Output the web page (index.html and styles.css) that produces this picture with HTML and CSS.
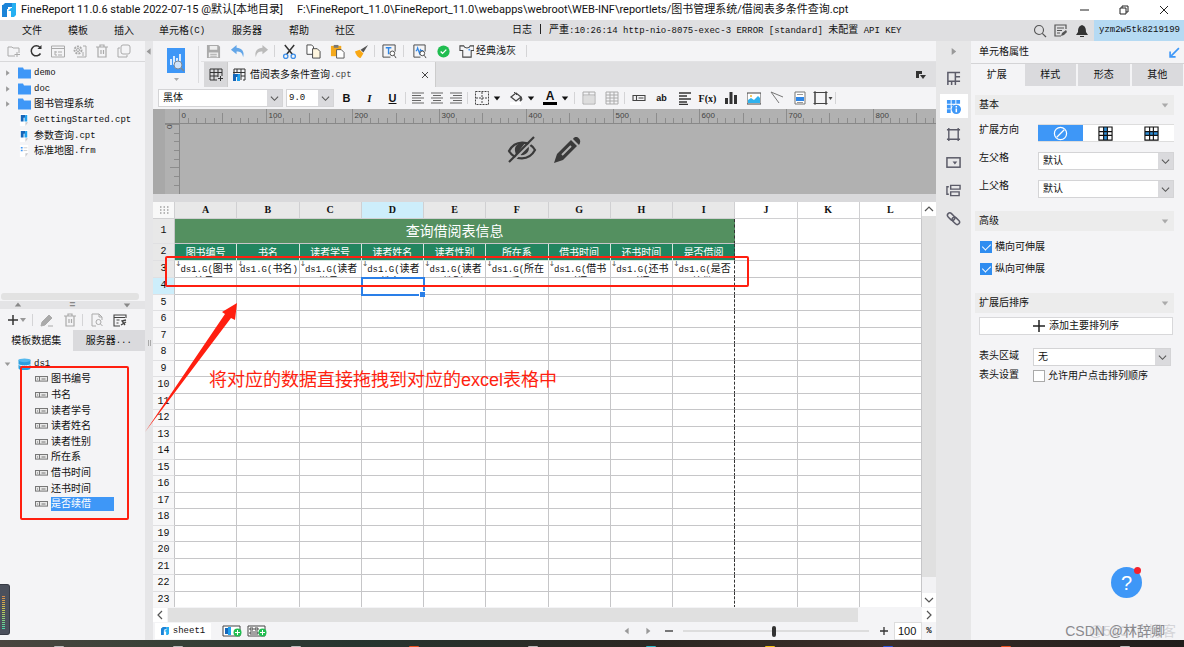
FILE: index.html
```
<!DOCTYPE html>
<html lang="zh-CN">
<head>
<meta charset="utf-8">
<title>FineReport 11.0.6</title>
<link rel="stylesheet" href="styles.css">
</head>
<body>
<svg class="defs" aria-hidden="true">
  <symbol id="fr" viewBox="0 0 14 14"><path d="M1 2l2-2h7v4H6v2H5v8H0V2z" fill="#1b84d8"/><path d="M10 0h4v12l-2 2H9V8H6l3-3h1z" fill="#26b0f2"/></symbol>
  <symbol id="chev" viewBox="0 0 10 10"><path d="M1 3l4 4 4-4" fill="none" stroke="#555" stroke-width="1.2"/></symbol>
  <symbol id="tri" viewBox="0 0 10 10"><path d="M1 3h8L5 8z" fill="currentColor"/></symbol>
  <symbol id="folder" viewBox="0 0 13 11"><path d="M0 0h5l1 2h7v9H0z" fill="#3e97f7"/></symbol>
  <symbol id="cpt" viewBox="0 0 12 13"><path d="M1 0h9v9l-3 4H1z" fill="#fff"/><path d="M10 9H7v4z" fill="#c9c9cc"/><path d="M2 1h5v3H5v4H2z" fill="#1565b8"/><path d="M7 1h2v7H6V5z" fill="#1ea0ee"/></symbol>
  <symbol id="field" viewBox="0 0 13 6"><rect x=".5" y=".5" width="12" height="4.6" fill="#e8e8e8" stroke="#777"/><path d="M4.5 1v4M6.5 3h4M2 3h1" stroke="#777"/></symbol>
  <symbol id="trash" viewBox="0 0 14 14"><path d="M1 3h12M5 3V1h4v2M3 3v10h8V3M6 6v4M8.5 6v4" fill="none" stroke="#aaa" stroke-width="1.2"/></symbol>
</svg>

<header class="titlebar">
  <svg class="i14"><use href="#fr"/></svg>
  <span>FineReport 11.0.6 stable 2022-07-15 @默认[本地目录]</span>
  <span class="path">F:\FineReport_11.0\FineReport_11.0\webapps\webroot\WEB-INF\reportlets/图书管理系统/借阅表多条件查询.cpt</span>
  <div class="winctl">
    <button aria-label="最小化"><svg viewBox="0 0 12 12"><path d="M2 6h9" stroke="#222"/></svg></button>
    <button aria-label="还原"><svg viewBox="0 0 12 12"><path d="M2 4h6v6H2zM4 4V2h6v6H8" fill="none" stroke="#222"/></svg></button>
    <button aria-label="关闭"><svg viewBox="0 0 12 12"><path d="M2 2l8 8M10 2l-8 8" stroke="#222"/></svg></button>
  </div>
</header>

<nav class="menubar">
  <button class="mi">文件</button><button class="mi">模板</button><button class="mi">插入</button><button class="mi wide">单元格<span class="m">(C)</span></button><button class="mi sv">服务器</button><button class="mi">帮助</button><button class="mi">社区</button>
  <p class="log">日志<i class="bar"></i>严重<span class="m">:10:26:14 http-nio-8075-exec-3 ERROR [standard] </span>未配置<span class="m"> API KEY</span></p>
  <div class="account">
    <button aria-label="搜索"><svg viewBox="0 0 14 14"><circle cx="6" cy="6" r="4.5" fill="none" stroke="#555" stroke-width="1.1"/><path d="M9.3 9.3L13 13" stroke="#555" stroke-width="1.2"/></svg></button>
    <button aria-label="反馈"><svg viewBox="0 0 14 14"><path d="M12 5V1H1v11h6M3 4h7M3 6.500h5M3 9h3" fill="none" stroke="#555" stroke-width="1.2"/><path d="M7 12l1-3 4-3 1 2-3 3z" fill="#555"/></svg></button>
    <button aria-label="通知"><svg viewBox="0 0 14 14"><path d="M7 1c3 1 4 3 4 7l2 3H1l2-3c0-4 1-6 4-7zM5 12h4v1H5z" fill="#333"/></svg></button>
    <span class="user m">yzm2w5tk8219199</span>
  </div>
</nav>

<main class="main">
  <aside class="left">
    <div class="tools">
      <button aria-label="新建"><svg viewBox="0 0 14 14"><path d="M8 12H1V3h4l1 1h6v5M10 8v5M7.500 10.500h5.500" fill="none" stroke="#aaa"/></svg></button>
      <button aria-label="刷新"><svg viewBox="0 0 14 14"><path d="M11.500 9.500a5 5 0 1 1-.5-6" fill="none" stroke="#333" stroke-width="1.500"/><path d="M12.500 1v4H8.500z" fill="#333"/></svg></button>
      <button aria-label="目录"><svg viewBox="0 0 14 14"><path d="M.5 2h13v11H.5zM.5 4.500h13M4 7v4M4 8h2M4 11h2M7 8h4M7 11h4" fill="none" stroke="#aaa"/></svg></button>
      <button aria-label="设置"><svg viewBox="0 0 14 14"><circle cx="5" cy="6" r="3.500" fill="none" stroke="#aaa" stroke-width="2" stroke-dasharray="2 1"/><circle cx="5" cy="6" r="1.500" fill="none" stroke="#aaa"/><path d="M10 2h3v11H4M10 8v4" fill="none" stroke="#aaa"/></svg></button>
      <button aria-label="删除"><svg><use href="#trash"/></svg></button>
      <button aria-label="复制"><svg viewBox="0 0 14 14"><rect x="4" y="1" width="9" height="9" rx="2" fill="none" stroke="#aaa"/><path d="M3 4H1v9h9v-2" fill="none" stroke="#aaa"/></svg></button>
    </div>
    <ul class="tree files">
      <li><svg class="ar"><use href="#tri"/></svg><svg class="ic"><use href="#folder"/></svg><span class="m">demo</span></li>
      <li><svg class="ar"><use href="#tri"/></svg><svg class="ic"><use href="#folder"/></svg><span class="m">doc</span></li>
      <li><svg class="ar"><use href="#tri"/></svg><svg class="ic"><use href="#folder"/></svg>图书管理系统</li>
      <li><i class="ar"></i><svg class="ic"><use href="#cpt"/></svg><span class="m">GettingStarted.cpt</span></li>
      <li><i class="ar"></i><svg class="ic"><use href="#cpt"/></svg>参数查询<span class="m">.cpt</span></li>
      <li><i class="ar"></i><svg class="ic" viewBox="0 0 12 13"><path d="M1 0h9v9l-3 4H1z" fill="#fff"/><path d="M10 9H7v4z" fill="#c9c9cc"/><path d="M2 3h2M2 6h2" stroke="#3e97f7" stroke-width="1.500"/><path d="M5 3h4M5 6h4" stroke="#ccc"/></svg>标准地图<span class="m">.frm</span></li>
    </ul>
    <div class="hbar"></div>
    <div class="split"><svg class="up"><use href="#tri"/></svg><b>=</b><svg><use href="#tri"/></svg></div>
    <div class="tools data">
      <button aria-label="添加"><svg viewBox="0 0 20 14"><path d="M6 2v10M1 7h10" stroke="#333" stroke-width="1.500"/><path d="M13 5h6l-3 4z" fill="#999"/></svg></button>
      <i class="sep"></i>
      <button aria-label="编辑"><svg viewBox="0 0 14 14"><path d="M1 13l1-4 7-7 3 3-7 7zM8 13h5" fill="#aaa" stroke="#aaa"/></svg></button>
      <button aria-label="删除"><svg><use href="#trash"/></svg></button>
      <i class="sep"></i>
      <button aria-label="预览"><svg viewBox="0 0 14 14"><path d="M6 13H2V1h7l3 3v3M9 1v3h3" fill="none" stroke="#aaa"/><circle cx="8.500" cy="9" r="2.500" fill="none" stroke="#aaa"/><path d="M10.500 11l2 2" stroke="#aaa"/></svg></button>
      <button aria-label="数据"><svg viewBox="0 0 14 14"><path d="M7 13H1V2h12v3M1 4.500h11M3.500 7h3M3.500 10h2" fill="none" stroke="#444" stroke-width="1.100"/><path d="M13 7l-4 1 3 4M8 12l5-3" fill="none" stroke="#444" stroke-width="1.300"/></svg></button>
    </div>
    <div class="dtabs"><button class="on">模板数据集</button><button>服务器<span class="m">...</span></button></div>
    <ul class="tree ds">
      <li><svg class="ar open"><use href="#tri"/></svg><svg class="ic" viewBox="0 0 13 13"><path d="M0 2v9c1 3 12 3 13 0V2z" fill="#2b9fe0"/><ellipse cx="6.500" cy="2.500" rx="6.500" ry="2" fill="#56b9ee"/><path d="M0 7c2 2 11 2 13 0" fill="none" stroke="#fff"/></svg><span class="m">ds1</span></li>
      <li><svg class="fd"><use href="#field"/></svg>图书编号</li>
      <li><svg class="fd"><use href="#field"/></svg>书名</li>
      <li><svg class="fd"><use href="#field"/></svg>读者学号</li>
      <li><svg class="fd"><use href="#field"/></svg>读者姓名</li>
      <li><svg class="fd"><use href="#field"/></svg>读者性别</li>
      <li><svg class="fd"><use href="#field"/></svg>所在系</li>
      <li><svg class="fd"><use href="#field"/></svg>借书时间</li>
      <li><svg class="fd"><use href="#field"/></svg>还书时间</li>
      <li><svg class="fd"><use href="#field"/></svg><span class="sel">是否续借</span></li>
    </ul>
  </aside>

  <div class="gutter"><svg><use href="#tri"/></svg><span></span></div>

  <section class="center">
    <div class="top">
      <button class="preview" aria-label="预览"><svg viewBox="0 0 26 36"><path d="M4 1h18v25H4z" fill="#3e97f7"/><path d="M8 12v6M11 9v9M14 11v5M17 7v8" stroke="#fff" stroke-width="1.600"/><circle cx="15" cy="18" r="4" fill="#cfe3fb" stroke="#7c8894"/><path d="M18 21l3 3" stroke="#7c8894" stroke-width="1.500"/><path d="M11 31h5l-2.500 3z" fill="#aaa"/></svg></button>
      <div class="rows">
        <div class="tb">
          <button aria-label="保存"><svg viewBox="0 0 16 16"><path d="M1 1h12l2 2v12H1z" fill="#aaa"/><path d="M4 2h8v4H4zM3 9h10v5H3z" fill="#eee"/><path d="M4.500 11h7M4.500 13h7" stroke="#aaa"/></svg></button>
          <button aria-label="撤销"><svg viewBox="0 0 16 16"><path d="M7 1L1 6l6 5V8c4 0 6 1 7 6 2-6-2-10-7-10z" fill="#63a6e8"/></svg></button>
          <button aria-label="重做"><svg viewBox="0 0 16 16"><path d="M9 1l6 5-6 5V8c-4 0-6 1-7 6C0 8 4 4 9 4z" fill="#bbb"/></svg></button>
          <i class="sep"></i>
          <button aria-label="剪切"><svg viewBox="0 0 16 16"><path d="M3 1l8 10M13 1L5 11" stroke="#333" stroke-width="1.600"/><circle cx="4" cy="13" r="2.300" fill="none" stroke="#3e8fe8" stroke-width="1.400"/><circle cx="12" cy="13" r="2.300" fill="none" stroke="#3e8fe8" stroke-width="1.400"/></svg></button>
          <button aria-label="复制"><svg viewBox="0 0 16 16"><path d="M1 1h5l2 2v8H1z" fill="#fff" stroke="#444"/><path d="M7 5h5l3 3v7H7z" fill="#fff6df" stroke="#444"/></svg></button>
          <button aria-label="粘贴"><svg viewBox="0 0 16 16"><path d="M1 2h11v11H1z" fill="#f4a91c"/><path d="M4 1h5v3H4z" fill="#777"/><path d="M7 6h5l3 3v6H7z" fill="#fff" stroke="#555"/></svg></button>
          <button aria-label="格式刷"><svg viewBox="0 0 16 16"><path d="M1 8l5-2 4 4-3 5c-2 0-5-3-6-7z" fill="#f9a815"/><path d="M7 6l3 3 5-8z" fill="#555"/></svg></button>
          <i class="sep"></i>
          <button aria-label="查找"><svg viewBox="0 0 16 16"><path d="M9 14H1V1h13v7" fill="none" stroke="#444"/><path d="M4 4h6M7 4v7" stroke="#2f86e6" stroke-width="1.500"/><circle cx="11" cy="10" r="2.500" fill="#fff" stroke="#444"/><path d="M13 12l2 3" stroke="#444"/></svg></button>
          <i class="sep w"></i>
          <button aria-label="监控"><svg viewBox="0 0 16 16"><path d="M9 14H2V1h12v7" fill="none" stroke="#444"/><path d="M4 7h1l1-3 2 6 1-4 1 1h2" fill="none" stroke="#2f86e6" stroke-width="1.200"/><circle cx="11" cy="10" r="2.500" fill="#fff" stroke="#444"/><path d="M13 12l2 3" stroke="#444"/></svg></button>
          <button aria-label="正常"><svg viewBox="0 0 16 16"><circle cx="8" cy="8" r="6.500" fill="#20bd50"/><path d="M5 8l2 2 4-4" fill="none" stroke="#fff" stroke-width="1.500"/></svg></button>
          <button class="theme"><svg viewBox="0 0 16 16"><path d="M5 2H1v5h3v7h9V7h3V2h-4c-1 3-6 3-7 0z" fill="none" stroke="#444" stroke-width="1.100"/><circle cx="11" cy="6" r="1" fill="#3e97f7"/></svg>经典浅灰</button>
          <i class="sep w"></i>
        </div>
        <div class="tabs">
          <button class="add" aria-label="新建模板"><svg viewBox="0 0 14 14"><path d="M8 12H1V1h12v7M1 4.500h12M1 8h8M5 1v11M9 1v8M11.500 8v5M9 10.500h5" fill="none" stroke="#333"/></svg></button>
          <div class="tab"><svg class="i14" viewBox="0 0 14 14"><path d="M2 6V1h11v11h-2M1 4.500h12M5 1v4M9 1v11M9 8h4" fill="none" stroke="#333"/><path d="M1 6h5v3H4v4H1z" fill="#1565b8"/><path d="M6 6h2v7H5v-3z" fill="#1ea0ee"/></svg>借阅表多条件查询<span class="m grey">.cpt</span><button class="x" aria-label="关闭标签"><svg viewBox="0 0 10 10"><path d="M2 2l6 6M8 2L2 8" stroke="#444"/></svg></button></div>
          <button class="more" aria-label="更多"><svg viewBox="0 0 12 10"><path d="M1 8V1h6v3H4v4z" fill="#333"/><path d="M5 5h6L8 9z" fill="#333"/></svg></button>
        </div>
      </div>
    </div>
    <div class="fmt">
      <label class="sel-box font"><select aria-label="字体"><option>黑体</option></select><svg><use href="#chev"/></svg></label>
      <label class="sel-box size"><select class="m" aria-label="字号"><option>9.0</option></select><svg><use href="#chev"/></svg></label>
      <button class="b23 t"><b>B</b></button><button class="b23 t"><em>I</em></button><button class="b23 t"><u>U</u></button>
      <i class="sep"></i>
      <button class="b19" aria-label="左对齐"><svg viewBox="0 0 14 14"><path d="M1 2h12M1 4.500h9M1 7h12M1 9.500h9M1 12h12" stroke="#666" stroke-width="1.200"/></svg></button>
      <button class="b19" aria-label="居中"><svg viewBox="0 0 14 14"><path d="M1 2h12M3 4.500h8M1 7h12M3 9.500h8M1 12h12" stroke="#666" stroke-width="1.200"/></svg></button>
      <button class="b19" aria-label="右对齐"><svg viewBox="0 0 14 14"><path d="M1 2h12M4 4.500h9M1 7h12M4 9.500h9M1 12h12" stroke="#666" stroke-width="1.200"/></svg></button>
      <i class="sep w"></i>
      <button class="b34" aria-label="边框"><svg viewBox="0 0 14 14"><path d="M.5.5h13v13H.5zM7 1v12M1 7h12" fill="none" stroke="#444" stroke-dasharray="2 1"/></svg><svg class="dd"><use href="#tri"/></svg></button>
      <button class="b34" aria-label="填充"><svg viewBox="0 0 14 14"><path d="M2 6l5-4 5 4-5 4z" fill="none" stroke="#444" stroke-width="1.300"/><path d="M5 1l3 3M12 6c2 3 0 4-1 4z" fill="#444" stroke="#444"/><path d="M1 12.500h11" stroke="#fff" stroke-width="3"/></svg><svg class="dd"><use href="#tri"/></svg></button>
      <button class="b34 colr" aria-label="字体颜色"><span>A</span><svg class="dd"><use href="#tri"/></svg></button>
      <i class="sep"></i>
      <button class="b23" aria-label="合并"><svg viewBox="0 0 14 14"><path d="M1 1h12v12H1zM1 4h12M7 1v3" fill="none" stroke="#aaa"/><path d="M2 5h10v7H2z" fill="#ddd"/></svg></button>
      <button class="b23" aria-label="拆分"><svg viewBox="0 0 14 14"><path d="M1 1h12v12H1zM1 4h12M1 7h12M1 10h12M5 1v12M9 1v12" fill="none" stroke="#aaa"/></svg></button>
      <i class="sep"></i>
      <button class="b23" aria-label="数据列"><svg viewBox="0 0 14 14"><path d="M1 4.500h12v5H1zM4.500 5v4M6.500 7h5" fill="none" stroke="#444" stroke-width="1.100"/></svg></button>
      <button class="b23 ab">ab</button>
      <button class="b23" aria-label="富文本"><svg viewBox="0 0 14 14"><path d="M1 2h12M1 5h8M1 8h12M1 11h8M1 13.500h9" stroke="#333" stroke-width="1.500"/></svg></button>
      <button class="b23 fx">F(x)</button>
      <button class="b23" aria-label="图表"><svg viewBox="0 0 14 14"><path d="M1 7h3v6H1zM5.500 1h3v12h-3zM10 4h3v9h-3z" fill="#333"/></svg></button>
      <button class="b23" aria-label="图片"><svg viewBox="0 0 14 14"><path d="M0 2h14v11H0z" fill="#fff" stroke="#444"/><path d="M1 12V9l3-2 3 2 4-4 2 2v5z" fill="#2fb2ee"/><circle cx="4" cy="5" r="1" fill="#f5b331"/></svg></button>
      <button class="b23" aria-label="斜线"><svg viewBox="0 0 14 14"><path d="M1 1l12 5M1 1l8 11" stroke="#777"/></svg></button>
      <button class="b23" aria-label="子报表"><svg viewBox="0 0 14 14"><path d="M2 1h10v12H2z" fill="#fff" stroke="#777"/><path d="M3 6h8v4H3z" fill="#2f86e6"/><path d="M4 3.500h6M4 11.500h6" stroke="#999"/></svg></button>
      <button class="b23" aria-label="控件"><svg viewBox="0 0 20 14"><path d="M2 1.500h11v11H2zM.5 1.500h14M.5 12.500h14M2 0v14M13 0v14" fill="none" stroke="#444"/><path d="M15.500 6h4l-2 3z" fill="#444"/></svg></button>
      <i class="sep"></i>
    </div>
    <div class="param">
      <svg class="ruler" id="ruler" aria-hidden="true"></svg>
      <div class="paramicons">
        <svg viewBox="0 0 30 28"><path d="M2 15C8 4 22 4 28 14c-6 11-20 11-26 1z" fill="none" stroke="#3a3a3a" stroke-width="2.200"/><path d="M8 15c-1-6 5-9 10-8L9 19zM21 9c3 6-2 11-8 10z" fill="#3a3a3a"/><path d="M4 27L28 3" stroke="#b1b1b1" stroke-width="2"/><path d="M2 26L27 1" stroke="#3a3a3a" stroke-width="2.200"/></svg>
        <svg viewBox="0 0 28 28"><path d="M1 27l3-9L18 4l6 6L10 24z" fill="#3a3a3a"/><path d="M20 3c3-5 10 1 6 6z" fill="#3a3a3a"/><path d="M9 19L18 10" stroke="#b1b1b1" stroke-width="2"/></svg>
      </div>
    </div>
    <div class="band"></div>
    <div class="sheet">
      <table class="grid">
        <thead><tr><th class="corner"><svg viewBox="0 0 10 8"><path d="M1 1h9M1 4h9M1 7h9" stroke="#777" stroke-width="1.200" stroke-dasharray="1.500 2"/></svg></th><th>A</th><th>B</th><th>C</th><th class="cur">D</th><th>E</th><th>F</th><th>G</th><th>H</th><th>I</th><th class="out">J</th><th class="out">K</th><th class="out">L</th></tr></thead>
        <tbody id="cells">
          <tr class="r1"><th>1</th><td colspan="9" class="title">查询借阅表信息</td><td></td><td></td><td></td></tr>
          <tr class="r2"><th>2</th><td><div>图书编号</div></td><td><div>书名</div></td><td><div>读者学号</div></td><td><div>读者姓名</div></td><td><div>读者性别</div></td><td><div>所在系</div></td><td><div>借书时间</div></td><td><div>还书时间</div></td><td><div>是否借阅</div></td><td></td><td></td><td></td></tr>
          <tr class="r3"><th>3</th><td><div><span class="m">ds1.G(</span>图书<br>编号<span class="m">)</span></div></td><td><div><span class="m">ds1.G(</span>书名<span class="m">)</span></div></td><td><div><span class="m">ds1.G(</span>读者<br>学号<span class="m">)</span></div></td><td><div><span class="m">ds1.G(</span>读者<br>姓名<span class="m">)</span></div></td><td><div><span class="m">ds1.G(</span>读者<br>性别<span class="m">)</span></div></td><td><div><span class="m">ds1.G(</span>所在<br>系<span class="m">)</span></div></td><td><div><span class="m">ds1.G(</span>借书<br>时间<span class="m">)</span></div></td><td><div><span class="m">ds1.G(</span>还书<br>时间<span class="m">)</span></div></td><td><div><span class="m">ds1.G(</span>是否<br>续借<span class="m">)</span></div></td><td></td><td></td><td></td></tr>
        </tbody>
      </table>
      <div class="vscroll"><button aria-label="向上"><svg class="up"><use href="#chev"/></svg></button><span></span><button aria-label="向下"><svg><use href="#chev"/></svg></button></div>
    </div>
    <div class="hscroll"><button aria-label="向左"><svg class="l"><use href="#chev"/></svg></button><span></span><button aria-label="向右"><svg class="r"><use href="#chev"/></svg></button></div>
    <footer class="foot">
      <button class="stab"><svg><use href="#fr"/></svg><span class="m">sheet1</span></button>
      <button aria-label="新增报表页"><svg class="new" viewBox="0 0 20 12"><path d="M1 1h17v10H1z" fill="#fff" stroke="#444"/><path d="M3 3h3v6H3z" fill="#1565b8"/><path d="M6 2h3v8H6z" fill="#1ea0ee"/><circle cx="15.500" cy="7.500" r="4" fill="#20bd50"/><path d="M13 7.500h5M15.500 5v5" stroke="#fff"/></svg></button>
      <button aria-label="新增聚合页"><svg class="new" viewBox="0 0 20 12"><path d="M1 1h17v10H1z" fill="#fff" stroke="#444"/><path d="M3 3h3v2H3zM8 3h3v2H8zM3 7h8v2H3z" fill="none" stroke="#444"/><circle cx="15.500" cy="7.500" r="4" fill="#20bd50"/><path d="M13 7.500h5M15.500 5v5" stroke="#fff"/></svg></button>
      <div class="zoom">
        <button aria-label="上一页"><svg class="l"><use href="#tri"/></svg></button>
        <button aria-label="下一页"><svg class="r"><use href="#tri"/></svg></button>
        <button aria-label="缩小"><svg viewBox="0 0 10 10"><path d="M1 5h8" stroke="#333" stroke-width="1.300"/></svg></button>
        <input type="range" aria-label="缩放" min="0" max="100" value="49">
        <button aria-label="放大"><svg viewBox="0 0 10 10"><path d="M1 5h8M5 1v8" stroke="#333" stroke-width="1.300"/></svg></button>
        <input class="pct" id="pct" type="text" value="100"><label class="m" for="pct">%</label>
      </div>
    </footer>
  </section>

  <nav class="side">
    <button aria-label="收起"><svg class="r"><use href="#tri"/></svg></button>
    <button aria-label="单元格元素"><svg viewBox="0 0 16 16"><path d="M2 12V1.500h13M2 11h8V1.500M2 10v5M6 11v4M10 11v4M10 6h5M10 11h5" fill="none" stroke="#5b5b68" stroke-width="1.600"/></svg></button>
    <button class="on" aria-label="单元格属性"><svg viewBox="0 0 16 16"><path d="M1 1h4v4H1zM6 1h4v4H6zM11 1h4v4h-4zM1 6h4v4H1zM1 11h4v4H1zM6 6h2v2H6z" fill="#3e97f7"/><circle cx="11" cy="11" r="5" fill="#3e97f7"/><path d="M11 10v4M11 7.500v1.500" stroke="#fff" stroke-width="1.600"/></svg></button>
    <button aria-label="悬浮元素"><svg viewBox="0 0 16 16"><path d="M3 3h10v10H3zM1 3h14M1 13h14M3 1v14M13 1v14" fill="none" stroke="#5b5b68" stroke-width="1.500"/></svg></button>
    <button aria-label="控件设置"><svg viewBox="0 0 16 16"><rect x="1" y="3" width="14" height="10" fill="none" stroke="#5b5b68" stroke-width="1.600"/><path d="M7 7h5l-2.500 3z" fill="#5b5b68"/></svg></button>
    <button aria-label="条件属性"><svg viewBox="0 0 16 16"><path d="M5 2.500h10v4H5zM5 9.500h9v4H5zM3 4H1v8h2" fill="none" stroke="#5b5b68" stroke-width="1.500"/></svg></button>
    <button aria-label="超级链接"><svg viewBox="0 0 16 16"><rect x="1" y="3.500" width="9" height="5" rx="2.500" transform="rotate(45 5.500 6)" fill="none" stroke="#5b5b68" stroke-width="1.600"/><rect x="6" y="8" width="9" height="5" rx="2.500" transform="rotate(45 10.500 10.500)" fill="none" stroke="#5b5b68" stroke-width="1.600"/></svg></button>
  </nav>

  <aside class="right">
    <h2>单元格属性<svg viewBox="0 0 10 10"><path d="M9 1L2 8M1 4v5h5" fill="none" stroke="#3e97f7" stroke-width="1.500"/></svg></h2>
    <div class="ptabs"><button class="on">扩展</button><button>样式</button><button>形态</button><button>其他</button></div>
    <div class="panel">
      <h3>基本<svg><use href="#tri"/></svg></h3>
      <div class="row"><span class="lb">扩展方向</span>
        <div class="seg">
          <button class="on" aria-label="不扩展"><svg viewBox="0 0 16 16"><circle cx="8" cy="8" r="6.500" fill="none" stroke="#fff" stroke-width="1.300"/><path d="M4 12l8-8" stroke="#fff" stroke-width="1.300"/></svg></button>
          <button aria-label="纵向"><svg viewBox="0 0 16 16"><path d="M6 1h4v14H6z" fill="#2f8fd8"/><path d="M1 1h14v14H1zM6 1v14M10 1v14M1 6h14M1 10h14" fill="none" stroke="#111" stroke-width="1.200"/></svg></button>
          <button aria-label="横向"><svg viewBox="0 0 16 16"><path d="M1 6h14v4H1z" fill="#2f8fd8"/><path d="M1 1h14v14H1zM6 1v14M10 1v14M1 6h14M1 10h14" fill="none" stroke="#111" stroke-width="1.200"/></svg></button>
        </div></div>
      <div class="row"><label class="lb" for="lp">左父格</label><div class="sel-box"><select id="lp"><option>默认</option></select><svg><use href="#chev"/></svg></div></div>
      <div class="row"><label class="lb" for="tp">上父格</label><div class="sel-box"><select id="tp"><option>默认</option></select><svg><use href="#chev"/></svg></div></div>
      <h3>高级<svg><use href="#tri"/></svg></h3>
      <label class="ck"><input type="checkbox" checked>横向可伸展</label>
      <label class="ck"><input type="checkbox" checked>纵向可伸展</label>
      <h3 class="sort">扩展后排序<svg><use href="#tri"/></svg></h3>
      <button class="addsort"><svg viewBox="0 0 12 12"><path d="M6 0v12M0 6h12" stroke="#222" stroke-width="1.500"/></svg>添加主要排列序</button>
      <div class="row hd"><label class="lb" for="ha">表头区域</label><div class="sel-box"><select id="ha"><option>无</option></select><svg><use href="#chev"/></svg></div></div>
      <div class="row hd set"><span class="lb">表头设置</span><label class="ck"><input type="checkbox">允许用户点击排列顺序</label></div>
    </div>
  </aside>
</main>

<div class="taskbar"><i></i><i></i><i></i><i class="o"></i><i></i><i class="cy"></i><i class="y"></i><i class="bl"></i><i class="o"></i><i></i></div>

<div class="mark cells"></div>
<div class="mark fields"></div>
<svg class="arrow" viewBox="0 0 96 132"><path d="M1 130L81 12l-3-2L93 1l-2 17-4-2z" fill="#ff1f10"/></svg>
<p class="note">将对应的数据直接拖拽到对应的excel表格中</p>
<div class="meter"><span></span></div>
<button class="help" aria-label="帮助">?</button>
<p class="wm faint">@51CTO博客</p>
<p class="wm">CSDN @林辞卿</p>
<script src="app.js"></script>
</body>
</html>
```
FILE: styles.css
```
* { box-sizing: border-box; }
body { margin: 0; height: 100vh; display: flex; flex-direction: column; overflow: hidden; position: relative; background: #f4f4f6; color: #111; font: 10px/14px "Liberation Sans", "Noto Sans CJK SC", sans-serif; }
button { border: 0; padding: 0; margin: 0; background: none; font: inherit; color: inherit; display: flex; align-items: center; justify-content: center; }
p, h2, h3, ul { margin: 0; padding: 0; font-weight: normal; font-size: inherit; }
ul { list-style: none; }
select, input { font: inherit; color: inherit; margin: 0; }
svg { display: block; flex: none; width: 14px; height: 14px; }
.defs { position: absolute; width: 0; height: 0; }
.m { font-family: "Liberation Mono", monospace; font-size: 9px; white-space: pre; }
.i14 { width: 14px; height: 14px; }
.sep { width: 1px; height: 12px; margin: 0 2px 0 1px; background: #d4d4d6; flex: none; }
.sep.w { margin: 0 3px 0 2px; }

.titlebar { height: 20px; flex: none; display: flex; align-items: center; background: #fff; padding-left: 2px; font: 11px/14px Roboto, "Noto Sans CJK SC", sans-serif; white-space: nowrap; }
.titlebar > span { margin-left: 5px; }
.titlebar .path { margin-left: 14px; }
.winctl { margin-left: auto; display: flex; }
.winctl button { width: 40px; }
.winctl svg { width: 12px; height: 12px; }

.menubar { height: 21px; flex: none; display: flex; align-items: center; background: #dfdfe1; padding-left: 9px; white-space: nowrap; }
.mi { width: 46px; }
.mi.wide { width: 70px; margin-right: 1px; }
.mi.sv { width: 58px; }
.log { margin-left: 144px; }
.log .bar { display: inline-block; width: 1px; height: 10px; margin: 0 8px; background: #222; vertical-align: -1px; }
.account { margin-left: auto; display: flex; align-self: stretch; align-items: center; }
.account button { width: 21px; }
.user { align-self: stretch; line-height: 21px; background: #b5daf3; padding: 0 4px 0 5px; margin-left: 1px; }

.main { flex: 1; min-height: 0; display: flex; }
.left { width: 145px; flex: none; display: flex; flex-direction: column; }
.tools { height: 21px; flex: none; display: flex; align-items: center; padding-left: 3px; border-bottom: 1px solid #d8d8da; }
.tools button { width: 22px; }
.tree li { flex: 1; display: flex; align-items: center; white-space: nowrap; }
.tree { display: flex; flex-direction: column; flex: none; }
.files { height: 94px; margin: 3px 0 134px; }
.tree .ar { width: 7px; height: 8px; margin: 0 7px 0 4px; color: #999; transform: rotate(-90deg); }
.tree .ar.open { transform: none; }
.tree .ic { width: 13px; height: 12px; margin-right: 3px; }
.hbar { height: 7px; flex: none; margin: 0 6px 1px 1px; border-radius: 3px; background: #e2e2e2; }
.split { height: 8px; flex: none; background: #e4e4e6; display: flex; align-items: center; justify-content: space-between; padding: 0 13px; color: #888; line-height: 8px; }
.split svg { width: 10px; height: 8px; }
.up { transform: rotate(180deg); }
.l { transform: rotate(90deg); }
.r { transform: rotate(-90deg); }
.data { border: 0; }
.data button { width: 23px; }
.data button:first-child { width: 28px; }
.data button:first-child svg { width: 20px; }
.dtabs { height: 21px; flex: none; display: flex; }
.dtabs button { flex: 1; background: #dadadd; }
.dtabs .on { background: #f4f4f6; }
.ds { height: 156px; margin-top: 5px; }
.fd { width: 13px; height: 6px; margin: 0 3px 0 35px; }
.ds .sel { width: 63px; background: #3e97f7; color: #fff; }
.gutter { width: 8px; flex: none; background: #e6e6e8; display: flex; flex-direction: column; align-items: center; color: #999; padding-top: 6px; }
.gutter svg { width: 8px; height: 9px; transform: rotate(90deg); }
.gutter span { width: 3px; height: 6px; margin-top: 284px; border: solid #aaa; border-width: 0 1px; }

.center { flex: 1; min-width: 0; display: flex; flex-direction: column; }
.top { display: flex; height: 46px; flex: none; }
.preview { width: 46px; border-right: 1px solid #dcdcde; margin: 5px 5px 4px 0; }
.preview svg { width: 26px; height: 36px; }
.rows { flex: 1; min-width: 0; }
.tb { height: 21px; display: flex; align-items: center; margin-left: -3px; border-bottom: 1px solid #e2e2e4; }
.tb button { width: 24px; }
.tb button.theme { width: auto; padding-left: 4px; gap: 2px; margin-right: 8px; }
.tb svg { width: 15px; height: 15px; }
.tabs { height: 25px; display: flex; background: #dfdfe1; }
.tabs .add { width: 24px; background: #d8d8da; border-right: 1px solid #ccc; }
.tab { width: 208px; background: #f4f4f6; display: flex; align-items: center; padding: 0 5px 0 4px; border-right: 1px solid #ccc; }
.tab .i14 { margin-right: 4px; }
.grey { color: #444; }
.x { margin-left: auto; }
.x svg { width: 10px; height: 10px; }
.more { margin: 0 9px 0 auto; }
.more svg { width: 12px; height: 10px; }

.fmt { height: 22px; flex: none; display: flex; align-items: center; padding-left: 5px; }
.sel-box { height: 18px; display: flex; align-items: center; background: #dadadd; border: 1px solid #d4d4d6; }
.sel-box select { flex: 1; min-width: 0; align-self: stretch; appearance: none; border: 0; border-radius: 0; background: #fff; padding: 0 4px; }
.sel-box svg { width: 9px; height: 9px; margin: 0 3px; }
.font { width: 125px; }
.size { width: 48px; margin: 0 1px 0 3px; }
.size select { padding: 0 2px; }
.b23 { width: 23px; flex: none; }
.b19 { width: 19px; flex: none; }
.b34 { width: 34px; flex: none; gap: 4px; }
.fmt > button svg { width: 14px; height: 14px; }
.fmt > button .dd { width: 8px; height: 8px; }
.t { font-size: 11px; }
.t em { font: italic bold 11px "Liberation Serif", serif; }
.t u { font-weight: bold; }
.colr span { width: 14px; line-height: 11px; font-size: 12px; font-weight: bold; border-bottom: 3px solid #000; }
.ab { font-weight: bold; font-size: 9px; }
.fx { font: bold 10px "Liberation Serif", serif; }
.fmt .b23:nth-last-child(2) svg { width: 20px; }

.param { height: 85px; flex: none; background: #b1b1b1; position: relative; }
.ruler { width: 100%; height: 85px; }
.paramicons { position: absolute; left: 45%; top: 27px; display: flex; gap: 15px; padding-left: 2px; }
.paramicons svg { width: 30px; height: 28px; }
.band { height: 8px; flex: none; background: #d9d9db; }

.sheet { flex: 1; min-height: 0; display: flex; overflow: hidden; background: #fff; }
.grid { flex: 1; width: 0; border-collapse: separate; border-spacing: 0; table-layout: fixed; align-self: flex-start; }
.grid th, .grid td { padding: 0; border: solid #c6c6c8; border-width: 0 1px 1px 0; text-align: center; font-weight: normal; line-height: 14px; overflow: hidden; background: #fff; }
.grid thead th { height: 17px; background: #e8e8e8; border-color: #d0d0d2; font: bold 10px/14px "Liberation Serif", serif; }
.grid thead .corner { width: 22px; background: #f8f8f8; }
.corner svg { width: 10px; height: 8px; margin: 0 auto; }
.grid thead .cur, .grid tbody .cur { background: #cdeefb; }
.grid thead .out { background: #fff; }
.grid tbody th { background: #f7f7f8; font: 10px/14px "Liberation Mono", monospace; border-bottom-color: #e0e0e2; }
.grid tr { height: 17px; }
.grid .even { height: 16px; }
.grid .r1 { height: 25px; }
.grid .r1 th, .grid .r2 th, .grid .r3 th { background: #e8e8e8; }
.grid .title { background: #549060; color: #fff; font-size: 14px; line-height: 24px; }
.grid .r2 td:nth-child(-n+10) { background: #22855f; color: #fff; border-color: #d5e5dc; }
.r2 div { height: 16px; line-height: 18px; overflow: hidden; }
.r3 div { height: 16px; line-height: 11px; overflow: hidden; position: relative; padding: 2px 0 0 2px; }
.r3 td:nth-child(-n+10) div::before { content: "↓"; position: absolute; left: 0; top: -4px; font: 8px/14px "DejaVu Sans", sans-serif; color: #555; }
.grid .edge, .grid .title, .grid .r2 td:nth-child(10), .grid .r3 td:nth-child(10) { border-right: 1px dashed #333; }
.grid td.active { outline: 2px solid #2a7fe8; outline-offset: -1px; position: relative; overflow: visible; }
.active::after { content: ""; position: absolute; right: -2px; bottom: -3px; width: 5px; height: 5px; background: #2a7fe8; border: solid #fff; border-width: 1px 0 0 1px; }
.vscroll { width: 14px; flex: none; display: flex; flex-direction: column; background: #f2f2f4; }
.vscroll button, .hscroll button { width: 14px; height: 14px; background: #fff; flex: none; }
.vscroll svg, .hscroll svg { width: 10px; height: 10px; }
.vscroll span { height: 361px; margin-bottom: auto; background: #e0e0e0; }
.hscroll { height: 14px; flex: none; display: flex; margin-top: 1px; }
.hscroll span { width: 690px; margin: 0 auto 0 1px; background: #e0e0e0; }
.foot { height: 18px; flex: none; display: flex; align-items: center; padding-left: 2px; }
.stab { height: 16px; width: 56px; background: #fff; gap: 4px; margin-right: 11px; }
.stab svg { width: 8px; height: 8px; }
.new { width: 20px; height: 12px; margin-right: 5px; }
.zoom { margin-left: auto; display: flex; align-items: center; }
.zoom button { width: 21px; color: #999; }
.zoom svg { width: 10px; height: 10px; }
.zoom button:nth-child(-n+2) svg { width: 8px; height: 8px; }
.zoom input[type=range] { appearance: none; width: 186px; height: 12px; background: linear-gradient(#ddd, #ddd) center / 100% 2px no-repeat; margin: 0 4px; }
.zoom input::-webkit-slider-thumb { appearance: none; width: 4px; height: 11px; border-radius: 2px; background: #333; }
.zoom .pct { width: 28px; height: 18px; border: 1px solid #ddd; background: #fff; padding: 0 3px; font-size: 11px; }
.zoom label { width: 14px; text-align: center; font-weight: bold; }

.side { width: 35px; flex: none; background: #e7e7e8; display: flex; flex-direction: column; align-items: center; gap: 4px; }
.side button { width: 28px; height: 24px; }
.side button:first-child { height: 21px; color: #999; }
.side button:first-child svg { width: 9px; height: 9px; }
.side svg { width: 15px; height: 15px; }
.side .on { background: #fff; }
.right { width: 213px; flex: none; display: flex; flex-direction: column; }
.right h2 { height: 23px; display: flex; align-items: center; justify-content: space-between; padding: 0 4px 0 8px; border-bottom: 1px solid #d4d4d6; }
.right h2 svg { width: 11px; height: 11px; }
.ptabs { display: flex; gap: 2px; height: 22px; padding-right: 1px; }
.ptabs button { flex: 1; background: #dadadd; }
.ptabs .on { background: #f4f4f6; }
.panel { padding: 9px 10px 0 4px; display: flex; flex-direction: column; }
.panel h3 { height: 20px; display: flex; align-items: center; justify-content: space-between; padding: 0 5px 0 4px; background: #ececec; }
.panel h3 svg { width: 8px; height: 8px; color: #aaa; }
.row { display: flex; height: 18px; margin: 9px 0 1px 4px; }
.row .lb { width: 59px; line-height: 12px; }
.row .sel-box, .seg { flex: 1; }
.seg { display: flex; background: #fff; border: 1px solid #ddd; border-width: 1px 0; }
.seg button { flex: 1; }
.seg .on { background: #3e97f7; }
.seg svg { width: 15px; height: 15px; }
.row + h3 { margin-top: 12px; }
.ck { display: flex; align-items: center; height: 12px; gap: 3px; white-space: nowrap; }
.ck input { width: 12px; height: 12px; flex: none; appearance: none; border: 1px solid #aaa; background: #fff; position: relative; }
.ck input:checked { background: #2f8df0; border-color: #2f8df0; }
.ck input:checked::after { content: ""; position: absolute; left: 3px; top: 0; width: 4px; height: 7px; border: solid #fff; border-width: 0 1px 1px 0; transform: rotate(45deg); }
.panel > .ck { margin: 10px 0 0 5px; }
.panel h3.sort { margin-top: 18px; }
.addsort { height: 18px; margin: 4px 1px 4px 4px; background: #fff; border: 1px solid #d8d8da; gap: 4px; }
.addsort svg { width: 12px; height: 12px; }
.row.hd { margin-right: 3px; }
.row.hd .lb { width: 54px; line-height: 16px; }
.row.set { margin-top: 0; }
.row.set .ck { height: 18px; }

.taskbar { height: 7px; flex: none; display: flex; justify-content: space-around; align-items: flex-end; background: linear-gradient(90deg, #4a4640, #3a4238 12%, #26352f 30%, #2c2722 55%, #3a2d28 75%, #1f1c1a); }
.taskbar i { width: 10px; height: 1px; background: #bbb; border-radius: 2px 2px 0 0; }
.taskbar .o { background: #e8501e; }
.taskbar .cy { background: #2bb6c6; }
.taskbar .y { background: #f3c012; }
.taskbar .bl { background: #2a55e0; }

.mark { position: absolute; border: 2px solid #ff1f10; border-radius: 2px; pointer-events: none; }
.mark.cells { left: 165px; top: 256px; width: 584px; height: 31px; }
.mark.fields { left: 20px; top: 366px; width: 109px; height: 154px; }
.arrow { position: absolute; left: 144px; top: 302px; width: 96px; height: 132px; }
.note { position: absolute; left: 209px; top: 368px; font-size: 18px; line-height: 24px; color: #ff1f10; white-space: nowrap; }
.meter { position: absolute; left: 0; top: 584px; width: 10px; height: 51px; background: #4b505c; border: 1px solid #363a44; border-left: 0; border-radius: 0 3px 3px 0; padding: 11px 4px 4px 2px; }
.meter span { display: block; height: 34px; background: repeating-linear-gradient(transparent 0 1px, #4b505c 1px 2px), linear-gradient(#d88a4a, #c9c850 40%, #40d8b0); }
.help { position: absolute; right: 42px; bottom: 49px; width: 31px; height: 31px; border-radius: 50%; background: #3e97f7; color: #fff; font-size: 20px; line-height: 24px; }
.help::after { content: ""; position: absolute; right: 1px; top: 0; width: 7px; height: 7px; border-radius: 50%; background: #f5222d; }
.wm { position: absolute; right: 19px; bottom: 6px; font-size: 14px; line-height: 20px; color: #8a8a8e; white-space: nowrap; }
.wm.faint { right: 8px; font-size: 14px; color: #d4d4d8; }
```
FILE: app.js
```
// Empty grid rows below the report template.
const body = document.getElementById('cells');
for (let r = 4; r <= 23; r++) {
  const tr = document.createElement('tr');
  if (r % 2 === 1) tr.className = 'even';
  let html = `<th${r === 4 ? ' class="cur"' : ''}>${r}</th>`;
  for (let c = 1; c <= 12; c++) {
    const cls = r === 4 && c === 4 ? 'active' : c === 9 ? 'edge' : '';
    html += `<td class="${cls}"></td>`;
  }
  tr.innerHTML = html;
  body.append(tr);
}

// Horizontal and vertical rulers of the parameter pane.
const unit = 8.67;
let s = '<rect width="12" height="85" fill="#a8a8a8"/><path d="M26.500 0v85M12 14.500H2000" stroke="#888" fill="none"/>';
for (let i = 0; i <= 87; i++) {
  const x = Math.round(26 + i * unit) + 0.5;
  const top = i % 10 === 0 ? 0 : i % 5 === 0 ? 4 : 9;
  s += `<path d="M${x} ${top}V14" stroke="#8c8c8c"/>`;
  if (i % 10 === 0) s += `<text x="${x + 2}" y="9" font-size="8" fill="#444">${i * 10}</text>`;
}
for (let i = 0; i < 8; i++) {
  const y = Math.round(15 + i * unit) + 0.5;
  s += `<path d="M${i === 0 ? 12 : i === 5 ? 17 : 21} ${y}H26" stroke="#8c8c8c"/>`;
}
s += '<text x="0" y="0" font-size="8" fill="#444" transform="translate(19 20) rotate(-90)">0</text>';
document.getElementById('ruler').innerHTML = s;
```
